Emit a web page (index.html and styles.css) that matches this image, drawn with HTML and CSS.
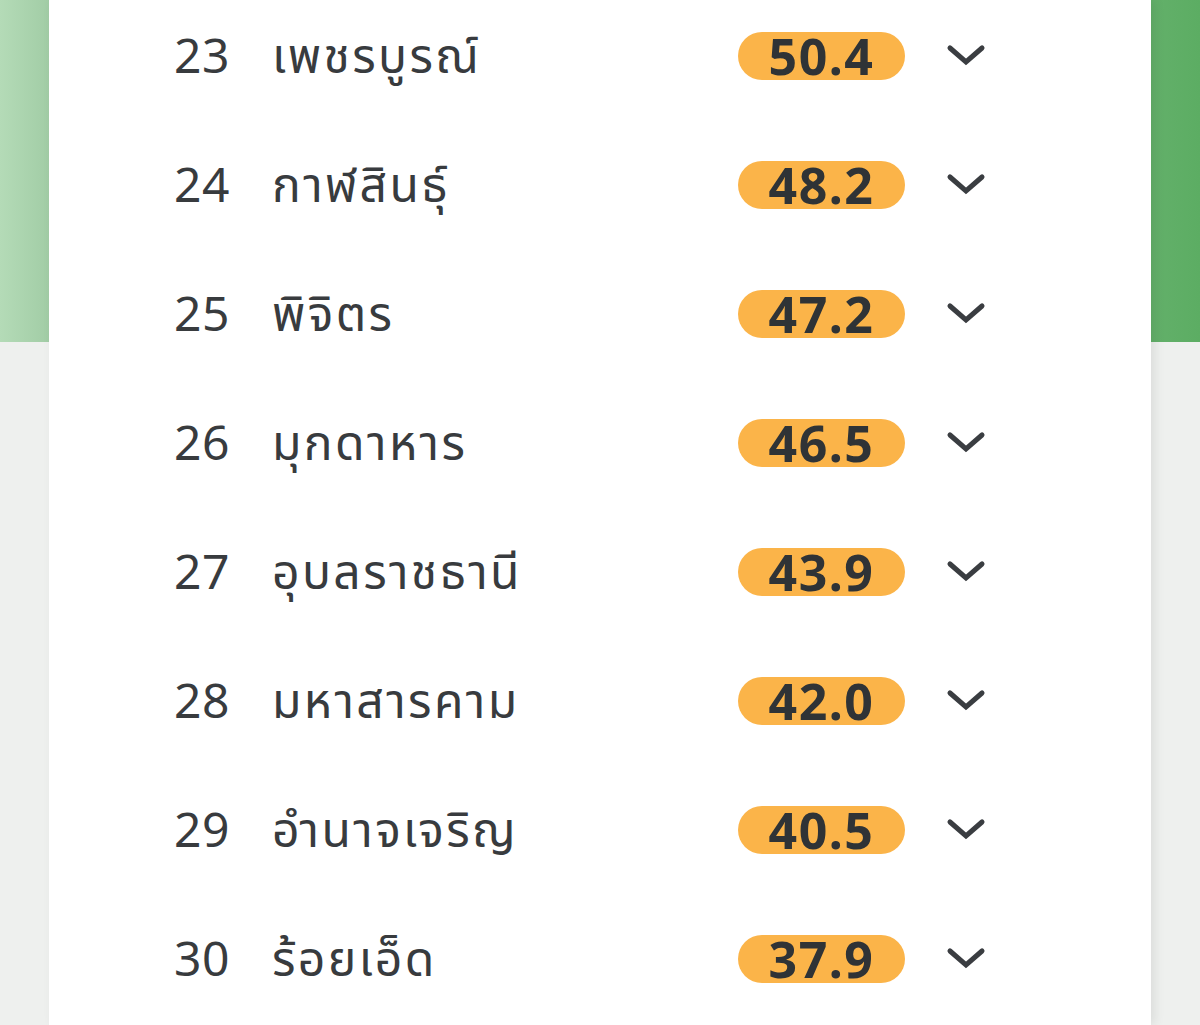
FILE: index.html
```html
<!DOCTYPE html>
<html lang="th">
<head>
<meta charset="utf-8">
<link rel="stylesheet" href="styles.css">
</head>
<body>
<div class="page">
  <div class="hero"></div>
  <div class="card">
    <ul class="list">
      <li class="row"><span class="rank">23</span><span class="name">เพชรบูรณ์</span><span class="score">50.4</span><svg class="chev" viewBox="0 0 40 24"><path d="M4 5 L20 19 L36 5"/></svg></li>
      <li class="row"><span class="rank">24</span><span class="name">กาฬสินธุ์</span><span class="score">48.2</span><svg class="chev" viewBox="0 0 40 24"><path d="M4 5 L20 19 L36 5"/></svg></li>
      <li class="row"><span class="rank">25</span><span class="name">พิจิตร</span><span class="score">47.2</span><svg class="chev" viewBox="0 0 40 24"><path d="M4 5 L20 19 L36 5"/></svg></li>
      <li class="row"><span class="rank">26</span><span class="name">มุกดาหาร</span><span class="score">46.5</span><svg class="chev" viewBox="0 0 40 24"><path d="M4 5 L20 19 L36 5"/></svg></li>
      <li class="row"><span class="rank">27</span><span class="name">อุบลราชธานี</span><span class="score">43.9</span><svg class="chev" viewBox="0 0 40 24"><path d="M4 5 L20 19 L36 5"/></svg></li>
      <li class="row"><span class="rank">28</span><span class="name">มหาสารคาม</span><span class="score">42.0</span><svg class="chev" viewBox="0 0 40 24"><path d="M4 5 L20 19 L36 5"/></svg></li>
      <li class="row"><span class="rank">29</span><span class="name">อำนาจเจริญ</span><span class="score">40.5</span><svg class="chev" viewBox="0 0 40 24"><path d="M4 5 L20 19 L36 5"/></svg></li>
      <li class="row"><span class="rank">30</span><span class="name">ร้อยเอ็ด</span><span class="score">37.9</span><svg class="chev" viewBox="0 0 40 24"><path d="M4 5 L20 19 L36 5"/></svg></li>
    </ul>
  </div>
</div>
</body>
</html>
```
FILE: styles.css
```css
html, body {
  margin: 0;
  padding: 0;
}
body {
  background: #eef0ee;
  font-family: "Noto Sans", "Noto Sans Thai", "Noto Sans Thai UI", sans-serif;
  color: #383b3e;
  overflow: hidden;
}
.page {
  position: relative;
  height: 1025px;
}
.hero {
  position: absolute;
  left: 0;
  top: 0;
  width: 100%;
  height: 342px;
  background: linear-gradient(90deg, #b4dbb7 0%, #a2cda6 4%, #7fbd85 50%, #63b06a 96%, #5cad63 100%);
}
.card {
  position: relative;
  margin: 0 49px;
  height: 1025px;
  background: #fff;
  box-shadow: 4px 0 10px rgba(0,0,0,0.08);
}
.list {
  list-style: none;
  margin: 0;
  padding: 0;
  position: relative;
  top: -10px;
}
.row {
  display: flex;
  align-items: center;
  height: 129px;
  padding-left: 125px;
}
.rank {
  width: 98px;
  font-size: 48px;
  line-height: 1;
  letter-spacing: 0.5px;
}
.name {
  flex: 1;
  font-size: 48px;
  line-height: 1;
  letter-spacing: 2.4px;
}
.score {
  width: 167px;
  height: 48px;
  border-radius: 24px;
  background: #fbb449;
  font-weight: 700;
  font-size: 50px;
  line-height: 48px;
  letter-spacing: 1.5px;
  text-align: center;
  color: #2f3336;
  margin-right: 41px;
  position: relative;
  top: 1px;
}
.chev {
  width: 40px;
  height: 24px;
  margin-right: 165px;
  fill: none;
  stroke: #3a3d41;
  stroke-width: 5;
  stroke-linecap: round;
  stroke-linejoin: miter;
}
```
